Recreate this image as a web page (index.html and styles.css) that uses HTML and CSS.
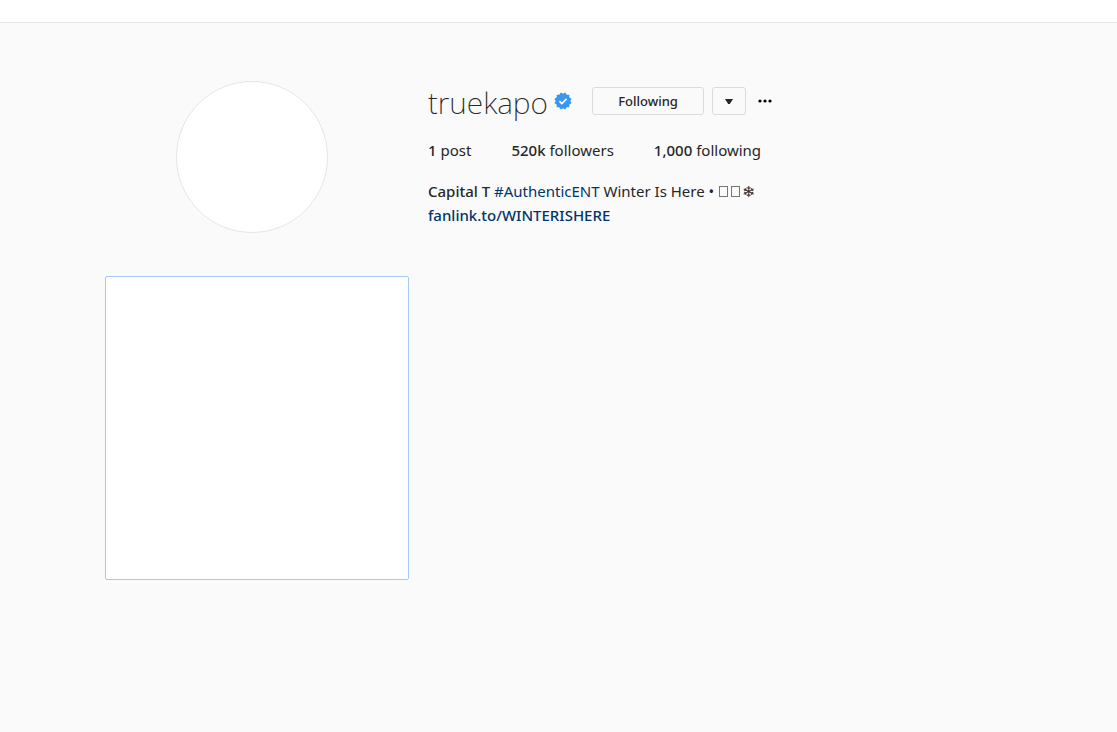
FILE: index.html
```
<!DOCTYPE html>
<html lang="en">
<head>
    <meta charset="utf-8">
    <meta name="viewport" content="width=device-width, initial-scale=1">
    <title>truekapo</title>
    <link rel="stylesheet" href="styles.css">
</head>
<body>
    <nav class="top-bar"></nav>

    <main class="page">
        <header class="profile">
            <div class="avatar"></div>

            <section class="info">
                <div class="title-row">
                    <h1 class="username">truekapo</h1>
                    <svg class="verified" width="18" height="18" viewBox="0 0 18 18" role="img" aria-label="Verified">
                        <g fill="#3897f0">
                            <rect x="2.7" y="2.7" width="12.6" height="12.6" rx=".6"/>
                            <rect x="2.7" y="2.7" width="12.6" height="12.6" rx=".6" transform="rotate(30 9 9)"/>
                            <rect x="2.7" y="2.7" width="12.6" height="12.6" rx=".6" transform="rotate(60 9 9)"/>
                        </g>
                        <path d="M5.4 9.2l2.4 2.4 4.8-4.8" fill="none" stroke="#fff" stroke-width="1.7"/>
                    </svg>
                    <button class="btn follow-button">Following</button>
                    <button class="btn menu-button" aria-label="Suggestions">
                        <svg width="8" height="5" viewBox="0 0 8 5"><path d="M0 0h8L4.8 5H3.2z" fill="#262626"/></svg>
                    </button>
                    <button class="more-button" aria-label="Options">
                        <svg width="14" height="4" viewBox="0 0 14 4" fill="#000">
                            <circle cx="2" cy="2" r="1.6"/>
                            <circle cx="7" cy="2" r="1.6"/>
                            <circle cx="12" cy="2" r="1.6"/>
                        </svg>
                    </button>
                </div>

                <ul class="stats">
                    <li><strong>1</strong> post</li>
                    <li><strong>520k</strong> followers</li>
                    <li><strong>1,000</strong> following</li>
                </ul>

                <div class="bio">
                    <strong>Capital T</strong> <a class="tag" href="#authenticent">#AuthenticENT</a> Winter Is Here • <span class="box"></span><span class="box"></span><span class="snowflake">❄&#xFE0E;</span><br>
                    <a class="site" href="#winterishere">fanlink.to/WINTERISHERE</a>
                </div>
            </section>
        </header>

        <div class="gallery">
            <a class="post" href="#post" aria-label="Post"></a>
        </div>
    </main>
</body>
</html>
```
FILE: styles.css
```
* {
    box-sizing: border-box;
}
body {
    margin: 0;
    background-color: #fafafa;
    color: #262626;
    font-family: "Segoe UI", "Noto Sans", "Open Sans", sans-serif;
    font-size: 15px;
    line-height: 24px;
}
strong {
    font-weight: 500;
}
a {
    color: #003569;
    text-decoration: none;
}
.top-bar {
    height: 23px;
    background-color: #fff;
    border-bottom: 1px solid #e5e5e5;
}
.page {
    max-width: 907px;
    margin: 0 auto;
    padding-top: 58px;
}
.profile {
    display: grid;
    grid-template-columns: 293px 1fr;
    gap: 30px;
    margin-bottom: 43px;
}
.avatar {
    width: 152px;
    height: 152px;
    margin: 0 auto;
    background-color: #fff;
    border: 1px solid #e6e6e6;
    border-radius: 50%;
}
.title-row {
    display: flex;
    align-items: center;
    height: 40px;
    margin-bottom: 17px;
}
.username {
    margin: 0;
    padding-top: 4px;
    font-family: "Segoe UI", "Noto Sans", sans-serif;
    font-size: 30px;
    font-weight: 200;
    line-height: 40px;
}
.verified {
    margin-left: 6px;
}
.btn {
    display: flex;
    align-items: center;
    justify-content: center;
    height: 28px;
    padding: 0;
    background: transparent;
    border: 1px solid #dbdbdb;
    border-radius: 3px;
    color: #262626;
    font: 500 13px "Segoe UI", "Noto Sans", sans-serif;
    cursor: pointer;
}
.follow-button {
    width: 112px;
    margin-left: 20px;
}
.menu-button {
    width: 34px;
    margin-left: 8px;
}
.more-button {
    display: flex;
    margin-left: 12px;
    padding: 0;
    background: none;
    border: 0;
    cursor: pointer;
}
.stats {
    display: flex;
    gap: 40px;
    margin: 0 0 17px;
    padding: 0;
    list-style: none;
}
.box {
    display: inline-block;
    width: 9px;
    height: 11px;
    margin: 0 2px 0 1px;
    border: 1px solid #777;
    vertical-align: baseline;
}
.snowflake {
    font-family: "DejaVu Sans", sans-serif;
    line-height: 1;
}
.site {
    font-weight: 500;
}
.gallery {
    display: grid;
    grid-template-columns: repeat(auto-fill, 304px);
}
.post {
    aspect-ratio: 1;
    background-color: #fff;
    border: 1px solid #a6c7f8;
    border-radius: 2px;
}
```
